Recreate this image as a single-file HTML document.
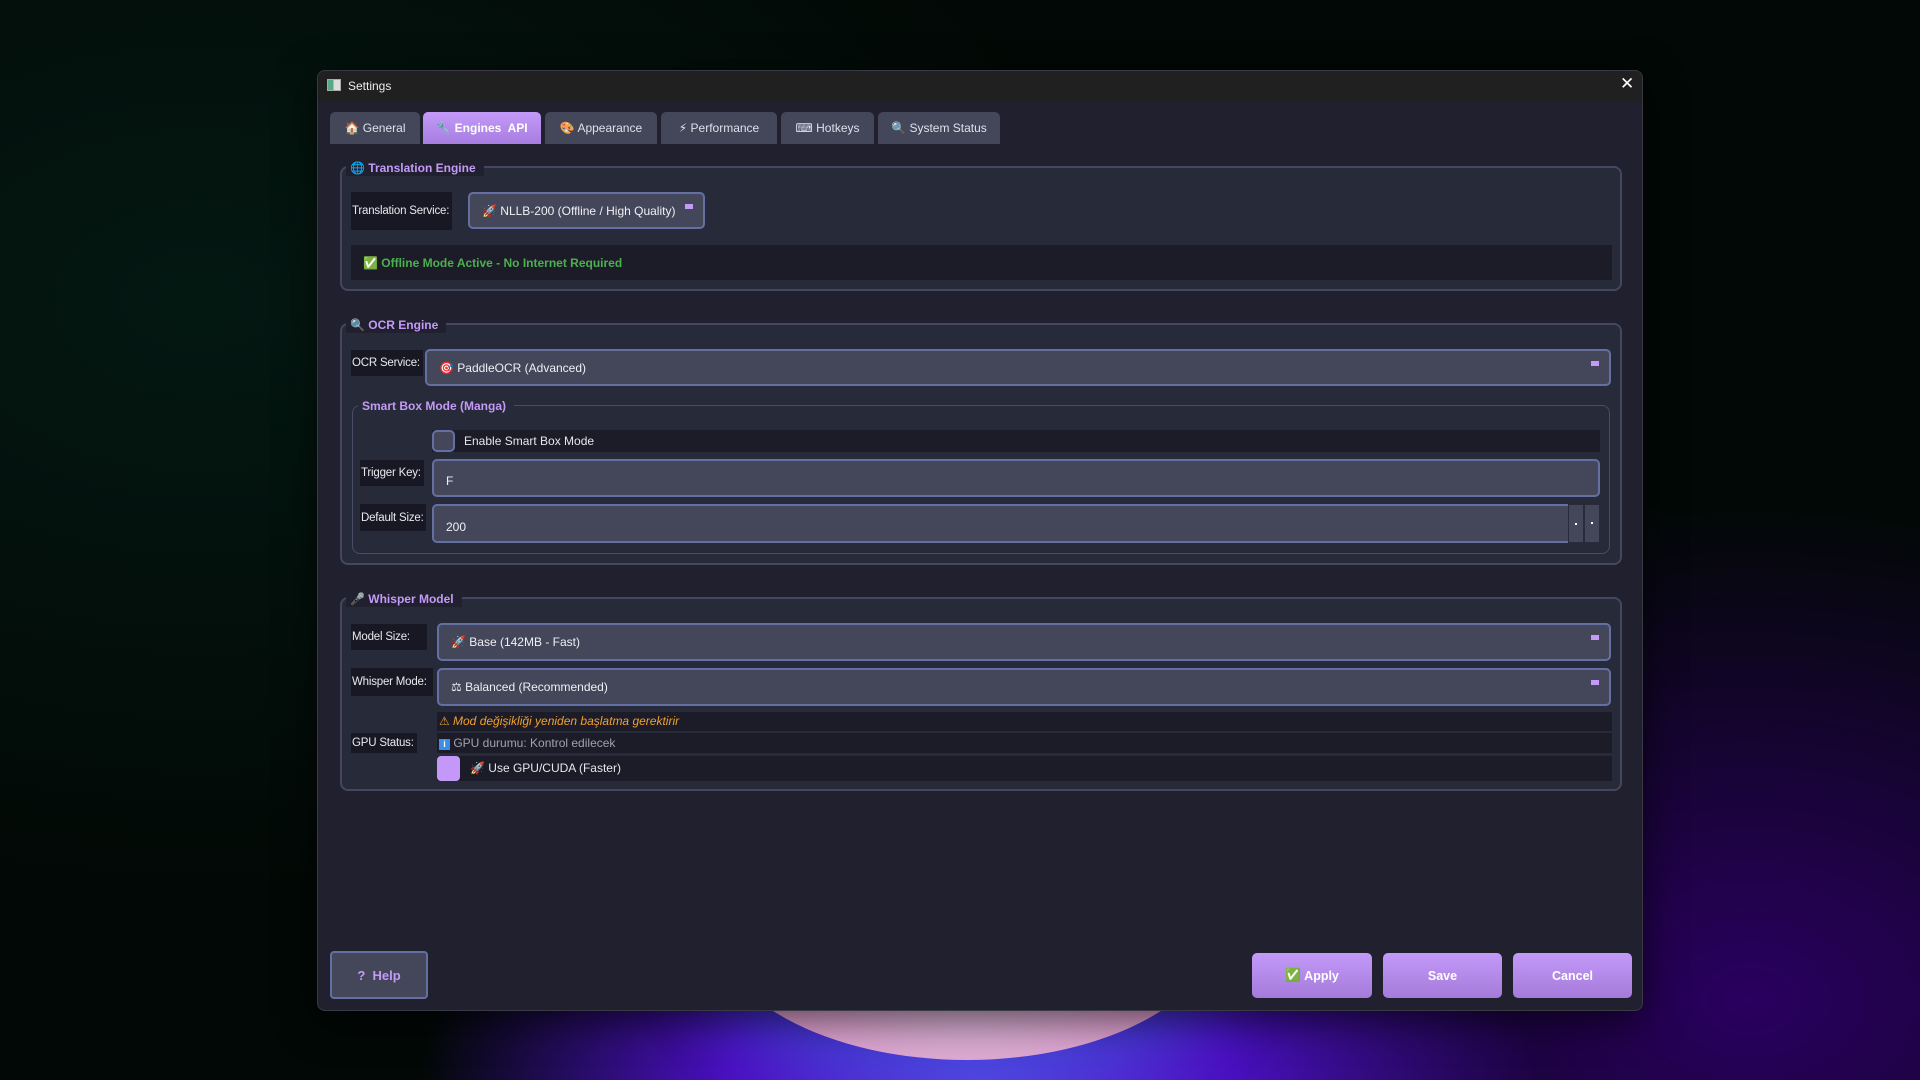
<!DOCTYPE html>
<html><head><meta charset="utf-8"><style>
*{box-sizing:border-box;margin:0;padding:0}
body{width:1920px;height:1080px;overflow:hidden;position:relative;font-family:"Liberation Sans","DejaVu Sans",sans-serif;font-size:12px;color:#e6e6ee;white-space:nowrap;
background:
radial-gradient(ellipse 560px 300px at 980px 1080px,#5a40e0 0%,#4a10c0 45%,rgba(40,0,100,0) 100%),
radial-gradient(ellipse 700px 500px at 1750px 1000px,#2a0060 0%,rgba(20,0,50,0) 100%),
radial-gradient(ellipse 900px 600px at 200px 300px,#041812 0%,rgba(0,0,0,0) 100%),
#020805;}
.a{position:absolute}
.glow{left:712px;top:780px;width:510px;height:280px;border-radius:50%;background:radial-gradient(ellipse at 50% 70%,#d8b8d8 0%,#e0a0d0 50%,#c890d8 100%);box-shadow:0 0 60px 30px rgba(60,80,220,.55)}
.dlg{left:317px;top:70px;width:1326px;height:941px;background:#20202e;border:1px solid #3a3a44;border-radius:8px;overflow:hidden;box-shadow:0 10px 40px rgba(0,0,0,.6)}
.tb{left:0;top:0;width:100%;height:30px;background:#202020}
.tab{top:41px;height:32px;background:#44465a;border-radius:5px 5px 0 0;color:#e0e0ea;line-height:32px;text-align:center}
.tab.on{background:linear-gradient(#c39af8,#a77ee0);color:#fff;font-weight:bold}
.grp{background:#272a38;border:2px solid #44475f;border-radius:8px}
.gt{color:#c49af8;font-weight:bold;background:#20202e;padding:0 8px 0 4px;line-height:16px}
.gt2{background:#272a38}
.lbl{background:#181824;color:#e8e8ee;display:flex;align-items:center;padding-left:1px;overflow:hidden;font-size:11.5px;letter-spacing:-0.2px}
.cb{background:#44465a;border:2px solid #6470a4;border-radius:5px;display:flex;align-items:center;padding-left:12px;color:#f0f0f4}
.ar{position:absolute;right:10px;top:10px;width:8px;height:5px;background:#c49af8}
.row{background:#1c1c28}
.btn{top:882px;height:45px;border-radius:5px;background:linear-gradient(#c29af8,#a57ada);color:#fff;font-weight:bold;font-size:12.5px;display:flex;align-items:center;justify-content:center}
</style></head><body>
<div class="a glow"></div>
<div class="a dlg">
 <div class="a tb"></div>
 <div class="a" style="left:9px;top:8px;width:14px;height:12px;background:linear-gradient(90deg,#5a8 0 45%,#ddd 45% 100%);border:1px solid #aaa"></div>
 <div class="a" style="left:30px;top:8px;color:#eee">Settings</div>
 <div class="a" style="left:1302px;top:3px;font-size:17px;color:#fff">✕</div>

 <div class="a tab" style="left:12px;width:90px">🏠 General</div>
 <div class="a tab on" style="left:105px;width:118px">🔧 Engines&nbsp; API</div>
 <div class="a tab" style="left:227px;width:112px">🎨 Appearance</div>
 <div class="a tab" style="left:343px;width:116px">⚡ Performance</div>
 <div class="a tab" style="left:463px;width:93px">⌨ Hotkeys</div>
 <div class="a tab" style="left:560px;width:122px">🔍 System Status</div>

 <div class="a grp" style="left:22px;top:95px;width:1282px;height:125px"></div>
 <div class="a gt" style="left:28px;top:89px">🌐 Translation Engine</div>
 <div class="a lbl" style="left:33px;top:121px;width:101px;height:38px">Translation Service:</div>
 <div class="a cb" style="left:150px;top:121px;width:237px;height:37px">🚀 NLLB-200 (Offline / High Quality)<span class="ar"></span></div>
 <div class="a row" style="left:33px;top:174px;width:1261px;height:35px;display:flex;align-items:center;padding-left:12px;color:#4caf50;font-weight:bold">✅&nbsp;Offline Mode Active - No Internet Required</div>

 <div class="a grp" style="left:22px;top:252px;width:1282px;height:242px"></div>
 <div class="a gt" style="left:28px;top:246px">🔍 OCR Engine</div>
 <div class="a lbl" style="left:33px;top:279px;width:72px;height:26px">OCR Service:</div>
 <div class="a cb" style="left:107px;top:278px;width:1186px;height:37px">🎯 PaddleOCR (Advanced)<span class="ar"></span></div>
 <div class="a grp" style="left:34px;top:334px;width:1258px;height:149px;border-width:1px;border-color:#4a4d66"></div>
 <div class="a gt gt2" style="left:40px;top:327px">Smart Box Mode (Manga)</div>
 <div class="a row" style="left:114px;top:359px;width:1168px;height:22px"></div>
 <div class="a" style="left:114px;top:359px;width:23px;height:22px;background:#44465a;border:2px solid #6470a4;border-radius:5px"></div>
 <div class="a" style="left:146px;top:363px">Enable Smart Box Mode</div>
 <div class="a lbl" style="left:42px;top:389px;width:64px;height:26px">Trigger Key:</div>
 <div class="a cb" style="left:114px;top:388px;width:1168px;height:38px;padding-top:6px">F</div>
 <div class="a lbl" style="left:42px;top:433px;width:66px;height:27px">Default Size:</div>
 <div class="a cb" style="left:114px;top:433px;width:1168px;height:39px;padding-top:6px">200</div>
 <div class="a" style="left:1250px;top:433px;width:16px;height:39px;background:#44465a;border:1px solid #2a2a3a"><div class="a" style="left:6px;top:18px;width:2px;height:2px;background:#fff"></div></div>
 <div class="a" style="left:1266px;top:433px;width:16px;height:39px;background:#44465a;border:1px solid #2a2a3a"><div class="a" style="left:6px;top:17px;width:2px;height:2px;background:#fff"></div></div>

 <div class="a grp" style="left:22px;top:526px;width:1282px;height:194px"></div>
 <div class="a gt" style="left:28px;top:520px">🎤 Whisper Model</div>
 <div class="a lbl" style="left:33px;top:553px;width:76px;height:26px">Model Size:</div>
 <div class="a cb" style="left:119px;top:552px;width:1174px;height:38px">🚀 Base (142MB - Fast)<span class="ar"></span></div>
 <div class="a lbl" style="left:33px;top:597px;width:82px;height:28px">Whisper Mode:</div>
 <div class="a cb" style="left:119px;top:597px;width:1174px;height:38px">⚖ Balanced (Recommended)<span class="ar"></span></div>
 <div class="a row" style="left:119px;top:641px;width:1175px;height:19px;color:#f0a030;font-style:italic;padding-left:2px;line-height:19px">⚠ Mod değişikliği yeniden başlatma gerektirir</div>
 <div class="a lbl" style="left:33px;top:662px;width:66px;height:20px">GPU Status:</div>
 <div class="a row" style="left:119px;top:662px;width:1175px;height:20px;color:#a0a0b0;padding-left:2px;line-height:20px"><span style="display:inline-block;width:11px;height:11px;background:#3a8ee8;color:#fff;font-size:9px;text-align:center;line-height:11px;font-weight:bold">i</span> GPU durumu: Kontrol edilecek</div>
 <div class="a row" style="left:119px;top:685px;width:1175px;height:25px"></div>
 <div class="a" style="left:119px;top:685px;width:23px;height:25px;background:#c398f8;border-radius:4px"></div>
 <div class="a" style="left:152px;top:690px">🚀 Use GPU/CUDA (Faster)</div>

 <div class="a" style="left:12px;top:880px;width:98px;height:48px;background:#44465a;border:2px solid #6470a4;border-radius:4px;color:#c49af8;font-weight:bold;font-size:13px;display:flex;align-items:center;justify-content:center">?&nbsp; Help</div>
 <div class="a btn" style="left:934px;width:120px"><span style="color:#4c4">✅</span>&nbsp;Apply</div>
 <div class="a btn" style="left:1065px;width:119px">Save</div>
 <div class="a btn" style="left:1195px;width:119px">Cancel</div>
</div>
</body></html>
